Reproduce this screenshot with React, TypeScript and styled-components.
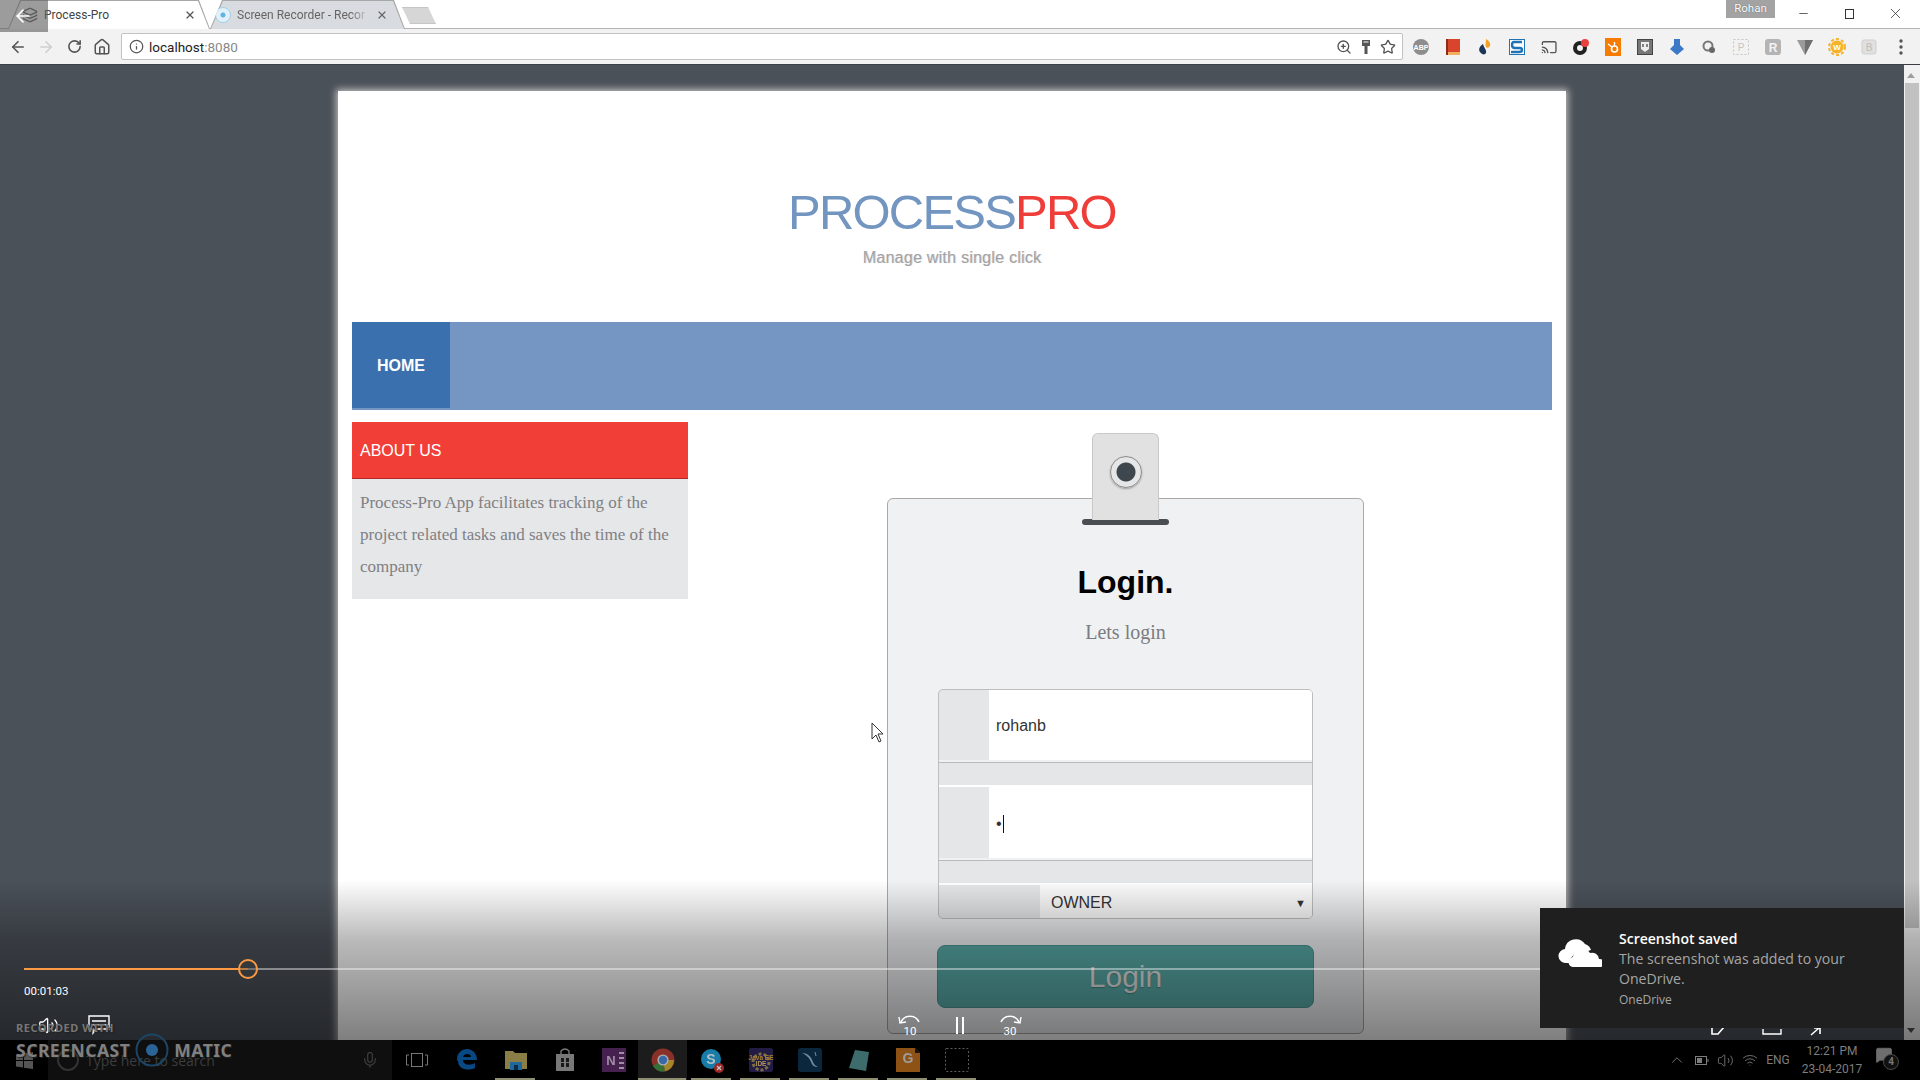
import React from "react"
import styled, { createGlobalStyle } from "styled-components"
import {
    ArrowLeft,
    ArrowRight,
    Cast,
    ChevronUp,
    Home,
    Info,
    Layers,
    MessageSquare,
    Mic,
    Minus,
    RotateCw,
    Star,
    Volume2,
    Wifi,
    X,
    ZoomIn
} from "lucide-react"

const GlobalStyle = createGlobalStyle`
    html, body {
        margin: 0;
        padding: 0;
        height: 100%;
        overflow: hidden;
        background: #000;
    }
    * {
        box-sizing: border-box;
    }
`

const Screen = styled.div`
    display: flex;
    flex-direction: column;
    width: 1920px;
    height: 1080px;
    overflow: hidden;
    font-family: "Liberation Sans", Arial, sans-serif;
`

/* browser chrome */
const TabStrip = styled.div`
    position: relative;
    display: flex;
    align-items: flex-start;
    height: 29px;
    padding: 0 2px 0 8px;
    background: #fff;
    border-bottom: 1px solid #b4b4b4;
`

const Tab = styled.div<{ $active?: boolean; $width: number; $left: number; $right: number }>`
    position: relative;
    display: flex;
    align-items: center;
    gap: 6px;
    width: ${p => p.$width}px;
    height: 29px;
    padding: 1px ${p => p.$right}px 0 ${p => p.$left}px;
    font-family: Roboto, sans-serif;
    font-size: 12px;
    color: ${p => (p.$active ? "#444" : "#666")};
    background: #a8a8a8;
    clip-path: polygon(12px 0, calc(100% - 11px) 0, 100% 100%, 0 100%);
    z-index: ${p => (p.$active ? 2 : 1)};

    &::before {
        content: "";
        position: absolute;
        inset: 1px 1px 0 1px;
        background: ${p => (p.$active ? "#fff" : "#d8dbdf")};
        clip-path: polygon(12px 0, calc(100% - 11px) 0, 100% 100%, 0 100%);
        z-index: -1;
    }
`

const TabTitle = styled.span<{ $fade?: boolean }>`
    flex: 1;
    overflow: hidden;
    white-space: nowrap;
    ${p => (p.$fade ? "mask-image: linear-gradient(90deg, #000 85%, transparent);" : "")}
`

const TabIconRing = styled.span`
    width: 16px;
    height: 16px;
    border-radius: 50%;
    border: 1px solid #9fd0ea;
    background: radial-gradient(circle, #5fb4e0 0 2px, #e2f1f9 3px);
    flex-shrink: 0;
`

const NewTab = styled.div`
    width: 34px;
    height: 17px;
    margin: 7px 0 0 -3px;
    background: #d6d6d6;
    border: 1px solid #c6c6c6;
    clip-path: polygon(0 0, calc(100% - 8px) 0, 100% 100%, 8px 100%);
`

const UserBadge = styled.div`
    width: 49px;
    height: 18px;
    margin-left: auto;
    margin-right: 5px;
    background: #a3a3a3;
    color: #fff;
    font-family: Roboto, sans-serif;
    font-size: 11.5px;
    line-height: 17px;
    text-align: center;
    text-shadow: 0 0 1px #555;
`

const WindowButton = styled.div`
    display: flex;
    align-items: center;
    justify-content: center;
    width: 46px;
    height: 26px;
    color: #333;
`

const RestoreGlyph = styled.span`
    position: relative;
    width: 9px;
    height: 10px;
    margin-top: 2px;
    border: 1px solid #333;
    background: #fff;

    &::before {
        content: "";
        position: absolute;
        top: -3px;
        left: 1px;
        width: 9px;
        height: 10px;
        border: 1px solid #333;
        z-index: -1;
    }
`

const BackHint = styled.div`
    position: absolute;
    top: 0;
    left: 0;
    width: 48px;
    height: 32px;
    display: flex;
    align-items: center;
    justify-content: center;
    padding-right: 3px;
    background: rgba(95, 95, 95, 0.62);
    color: #fff;
    z-index: 5;
`

const Toolbar = styled.div`
    display: flex;
    align-items: center;
    height: 36px;
    padding: 0 3px 0 4px;
    background: #f2f2f2;
    border-bottom: 1px solid #3c3f44;
`

const NavButton = styled.div<{ $dim?: boolean }>`
    display: flex;
    align-items: center;
    justify-content: center;
    width: 28px;
    color: ${p => (p.$dim ? "#cfcfcf" : "#555")};
`

const AddressBar = styled.div`
    display: flex;
    align-items: center;
    flex: 1;
    height: 27px;
    margin: 0 2px 0 5px;
    padding: 0 6px 0 7px;
    background: #fff;
    border: 1px solid #c2c2c2;
    border-radius: 2px;
    color: #555;
`

const AddressText = styled.span`
    margin-left: 5px;
    font-family: Roboto, sans-serif;
    font-size: 13.5px;
    color: #222;

    em {
        font-style: normal;
        color: #888;
    }
`

const AddressActions = styled.div`
    display: flex;
    align-items: center;
    gap: 6px;
    margin-left: auto;
`

const ExtSlot = styled.div`
    display: flex;
    align-items: center;
    justify-content: center;
    width: 32px;
    height: 18px;
`

/* page */
const Viewport = styled.div`
    position: relative;
    display: flex;
    flex: 1;
    min-height: 0;
    overflow: hidden;
    background: #4b5159;
`

const PageArea = styled.div`
    flex: 1;
    min-width: 0;
    padding-top: 26px;
`

const Page = styled.div`
    width: 1228px;
    height: 1000px;
    margin: 0 auto;
    padding: 0 14px;
    background: #fff;
    box-shadow: 0 0 7px 2px #bdbdbd;
`

const Brand = styled.header`
    display: flex;
    flex-direction: column;
    align-items: center;
    height: 231px;
    padding-top: 93px;
`

const Logo = styled.h1`
    margin: 0;
    font-size: 49px;
    line-height: 56px;
    font-weight: 400;
    letter-spacing: -1.8px;
    color: #7396c1;

    span {
        color: #ef3e3a;
    }
`

const Tagline = styled.div`
    margin-top: 9px;
    font-size: 16px;
    line-height: 18px;
    letter-spacing: 0.25px;
    color: #a2a2a2;
    text-shadow: 1px 0 0 #ddd;
`

const NavBar = styled.nav`
    display: flex;
    height: 88px;
    background: #7596c3;
`

const NavItem = styled.div`
    display: flex;
    align-items: center;
    justify-content: center;
    width: 98px;
    height: 86px;
    padding-top: 2px;
    background: #3a70ad;
    color: #fff;
    font-size: 16px;
    font-weight: 700;
`

const Columns = styled.div`
    display: grid;
    grid-template-columns: 336px 1fr;
    margin-top: 12px;
`

const AboutCard = styled.aside`
    align-self: start;
    background: #e6e7e9;
`

const AboutTitle = styled.div`
    height: 57px;
    padding-left: 8px;
    background: #f13f38;
    border-bottom: 1px solid #b22a26;
    color: #fff;
    font-size: 16px;
    line-height: 58px;
`

const AboutText = styled.p`
    margin: 0;
    padding: 8px 8px 16px;
    font-family: "Liberation Serif", "Times New Roman", serif;
    font-size: 17px;
    line-height: 32px;
    color: #7f8084;
`

const LoginColumn = styled.section`
    display: flex;
    justify-content: center;
    padding: 76px 0 0 11px;
`

const LoginCard = styled.div`
    position: relative;
    width: 477px;
    padding: 63px 0 25px;
    background: #f0f1f3;
    border: 1px solid #a9a9a9;
    border-radius: 6px;
`

const ClipBar = styled.div`
    position: absolute;
    top: 20px;
    left: 194px;
    width: 87px;
    height: 6px;
    border-radius: 3px;
    background: #4a4e52;
`

const Clip = styled.div`
    position: absolute;
    top: -66px;
    left: 204px;
    display: flex;
    justify-content: center;
    width: 67px;
    height: 87px;
    padding-top: 22px;
    background: #e1e1e2;
    border: 1px solid #c9c9c9;
    border-bottom: 0;
    border-radius: 6px 6px 0 0;
`

const ClipLens = styled.div`
    width: 32px;
    height: 32px;
    border-radius: 50%;
    border: 1px solid #8c8c8c;
    background: radial-gradient(circle, #3f474e 0 9px, #e6e6e6 10px);
    box-shadow: 0 1px 2px rgba(0, 0, 0, 0.3);
`

const LoginTitle = styled.h2`
    margin: 0;
    font-size: 32px;
    line-height: 40px;
    font-weight: 700;
    text-align: center;
    color: #000;
`

const LoginSubtitle = styled.p`
    margin: 18px 0 0;
    font-family: "Liberation Serif", "Times New Roman", serif;
    font-size: 20px;
    line-height: 24px;
    text-align: center;
    color: #7a7c80;
`

const Form = styled.div`
    width: 375px;
    margin: 45px 0 0 50px;
    overflow: hidden;
    background: #e5e6e8;
    border: 1px solid #bdbec0;
    border-radius: 5px;
`

const Field = styled.div<{ $height: number; $label: number }>`
    display: flex;
    height: ${p => p.$height}px;
    padding-left: ${p => p.$label}px;
`

const InputBox = styled.div`
    display: flex;
    align-items: center;
    flex: 1;
    padding: 2px 0 0 7px;
    background: #fff;
    font-size: 16px;
    color: #333;
`

const Caret = styled.span`
    width: 1px;
    height: 18px;
    margin-left: 1px;
    background: #111;
`

const Separator = styled.div`
    height: 27px;
    background: linear-gradient(#f0f1f3 0 2px, #b9babc 2px 3px, #e5e6e8 3px 25px, #fff 25px);
`

const SelectBox = styled.div`
    display: flex;
    align-items: center;
    justify-content: space-between;
    flex: 1;
    padding: 2px 6px 0 11px;
    background: #fbfbfb;
    font-size: 16px;
    color: #333;

    i {
        font-style: normal;
        font-size: 11px;
    }
`

const SubmitButton = styled.button`
    display: block;
    width: 377px;
    height: 63px;
    margin: 26px auto 0;
    padding: 0;
    background: #58aba8;
    border: 1px solid #4a9592;
    border-radius: 8px;
    color: #e4e4e4;
    font-family: "Liberation Sans", Arial, sans-serif;
    font-size: 30px;
    text-shadow: 0 1px 1px rgba(0, 0, 0, 0.25);
`

const Scrollbar = styled.div`
    display: flex;
    flex-direction: column;
    align-items: center;
    width: 16px;
    padding-top: 18px;
    background: #f1f1f1;
`

const ScrollThumb = styled.div`
    width: 14px;
    height: 845px;
    background: #c1c1c1;
`

const ScrollArrow = styled.span<{ $down?: boolean }>`
    position: absolute;
    right: 5px;
    ${p => (p.$down ? "bottom: 7px;" : "top: 8px;")}
    border-left: 4px solid transparent;
    border-right: 4px solid transparent;
    ${p => (p.$down ? "border-top: 5px solid #505050;" : "border-bottom: 5px solid #a0a0a0;")}
`

const Cursor = styled.svg`
    position: absolute;
    left: 871px;
    top: 657px;
`

/* video player over the page */
const PlayerShade = styled.div`
    position: absolute;
    inset: 0;
    background: linear-gradient(
        transparent 815px,
        rgba(0, 0, 0, 0.27) 875px,
        rgba(0, 0, 0, 0.5) 975px
    );
    pointer-events: none;
`

const SeekTrack = styled.div`
    position: absolute;
    top: 903px;
    left: 24px;
    right: 16px;
    height: 2px;
    background: rgba(255, 255, 255, 0.42);
`

const SeekFill = styled.div`
    height: 100%;
    background: #fb9a42;
`

const SeekKnob = styled.div`
    position: absolute;
    top: -9px;
    width: 20px;
    height: 20px;
    margin-left: -10px;
    border: 2px solid #fb9a42;
    border-radius: 50%;
    background: rgba(60, 60, 60, 0.35);
`

const PlayerTime = styled.div`
    position: absolute;
    top: 918px;
    left: 24px;
    font-family: Roboto, sans-serif;
    font-size: 11.5px;
    line-height: 16px;
    color: #fff;
`

const PlayerIcon = styled.div<{ $x: number; $y: number }>`
    position: absolute;
    left: ${p => p.$x}px;
    top: ${p => p.$y}px;
    display: flex;
    color: #fff;
`

const Toast = styled.div`
    position: absolute;
    right: 16px;
    bottom: 12px;
    display: flex;
    width: 364px;
    height: 120px;
    padding: 21px 0 0 18px;
    background: #1f1f1f;
    font-family: "Open Sans", sans-serif;
`

const ToastIcon = styled.div`
    width: 61px;
    padding-top: 10px;
`

const ToastTitle = styled.div`
    font-size: 14px;
    line-height: 20px;
    font-weight: 600;
    color: #fff;
`

const ToastBody = styled.div`
    width: 240px;
    font-size: 14.1px;
    line-height: 20px;
    color: #a6a6a6;
`

const ToastSource = styled.div`
    margin-top: 1px;
    font-size: 12px;
    line-height: 20px;
    color: #a6a6a6;
`

/* windows taskbar */
const Taskbar = styled.footer`
    position: relative;
    display: flex;
    align-items: stretch;
    height: 40px;
    background: #000;
    color: #777;
`

const StartButton = styled.div`
    display: flex;
    align-items: center;
    justify-content: center;
    width: 48px;
`

const SearchBox = styled.div`
    display: flex;
    align-items: center;
    width: 344px;
    padding: 0 12px 0 9px;
    background: #0f0f0f;
    color: #3d3d3d;
    font-family: "Open Sans", sans-serif;
    font-size: 14px;
`

const SearchRing = styled.span`
    width: 22px;
    height: 22px;
    margin-right: 7px;
    border: 2px solid #333;
    border-radius: 50%;
`

const SearchMic = styled.span`
    display: flex;
    margin-left: auto;
    margin-right: 1px;
`

const TaskViewButton = styled.div`
    display: flex;
    align-items: center;
    justify-content: center;
    width: 50px;
`

const TaskIcon = styled.div<{ $open?: boolean; $active?: boolean }>`
    position: relative;
    display: flex;
    align-items: center;
    justify-content: center;
    width: 49px;
    background: ${p => (p.$active ? "#1c1c1c" : "transparent")};

    svg {
        opacity: 0.78;
    }

    &::after {
        content: "";
        display: ${p => (p.$open ? "block" : "none")};
        position: absolute;
        left: ${p => (p.$active ? 0 : 4)}px;
        right: ${p => (p.$active ? 1 : 5)}px;
        bottom: 0;
        height: 2px;
        background: #8f8f72;
    }
`

const Tray = styled.div`
    display: flex;
    align-items: stretch;
    margin-left: auto;
    padding-right: 17px;
`

const TraySlot = styled.div<{ $width: number }>`
    display: flex;
    align-items: center;
    justify-content: center;
    width: ${p => p.$width}px;
    font-family: Roboto, sans-serif;
    font-size: 12px;
    color: #7d7d7d;
`

const Clock = styled.div`
    font-family: Roboto, sans-serif;
    font-size: 12px;
    line-height: 18px;
    text-align: center;
    color: #7d7d7d;
`

const TrayBadge = styled.span`
    position: absolute;
    left: 8px;
    top: 8px;
    width: 16px;
    height: 16px;
    border: 1px solid #4a4a4a;
    border-radius: 50%;
    background: #111;
    font-size: 10px;
    font-weight: 700;
    line-height: 14px;
    text-align: center;
    color: #777;
`

const TrayNotify = styled.div`
    position: relative;
    display: flex;
    width: 24px;
    height: 24px;
    margin-top: -4px;
    color: #6e6e6e;
`

const Watermark = styled.div`
    position: absolute;
    left: 16px;
    bottom: 13px;
    display: flex;
    flex-direction: column;
    font-family: "Noto Sans", sans-serif;
    font-weight: 700;
    color: #808080;
    text-shadow: 1px 1px 1px #222;
    pointer-events: none;
`

const WatermarkSmall = styled.div`
    font-size: 11px;
    line-height: 14px;
    letter-spacing: 0.55px;
    color: #777;
`

const WatermarkBrand = styled.div`
    display: flex;
    align-items: center;
    gap: 5px;
    margin-top: -2px;
    font-size: 17.5px;
    line-height: 30px;
    letter-spacing: 0.5px;
`

const extensions = [
    <g key="abp">
        <circle cx="8" cy="8" r="8" fill="#8d8d8d" />
        <text x="8" y="10.5" fontSize="7" fontWeight="700" fill="#fff" textAnchor="middle" fontFamily="Liberation Sans">ABP</text>
    </g>,
    <g key="book">
        <rect x="1" y="0" width="14" height="16" fill="#d9452c" />
        <rect x="1" y="13" width="14" height="3" fill="#f0b060" />
        <rect x="1" y="0" width="2" height="16" fill="#8e2a1a" />
    </g>,
    <g key="drop">
        <path d="M9 0c3 2 5 4 4 7-1 2-3 2-4 1-1-2 0-4 0-8z" fill="#f5a020" />
        <path d="M6 5C3 7 1 10 3 13c2 3 5 3 6 1 1-3-2-5-3-9z" fill="#1b3558" />
    </g>,
    <g key="s">
        <rect x="0.5" y="0.5" width="15" height="15" fill="#fff" stroke="#1f74b8" />
        <path d="M13 3H5Q3 3 3 6t3 3h5q2 0 2 2t-3 2H2" fill="none" stroke="#1f74b8" strokeWidth="2.4" />
    </g>,
    <g key="cast" transform="scale(.68)">
        <Cast size={24} color="#555" />
    </g>,
    <g key="ring">
        <circle cx="7" cy="9" r="5" fill="none" stroke="#222" strokeWidth="4" />
        <circle cx="12" cy="4" r="4" fill="#e8423f" />
    </g>,
    <g key="hub">
        <rect width="16" height="18" y="-1" fill="#f57c00" />
        <circle cx="9.5" cy="10" r="3" fill="none" stroke="#fff" strokeWidth="1.6" />
        <path d="M9.5 7V3M7 8 3 5" stroke="#fff" strokeWidth="1.4" />
    </g>,
    <g key="mask">
        <rect x="0.5" y="0.5" width="15" height="15" fill="#777" stroke="#444" />
        <path d="M4 3h8v7l-4 3-4-3z" fill="#eee" />
        <path d="M6 5v3M10 5v3" stroke="#555" strokeWidth="1.4" />
    </g>,
    <g key="arrow">
        <path d="M5 0h6v6l4 4-7 6-7-6 4-4z" fill="#3c78c8" />
    </g>,
    <g key="swirl">
        <circle cx="7" cy="7" r="4.5" fill="none" stroke="#777" strokeWidth="2" />
        <circle cx="11" cy="11" r="3" fill="#666" />
    </g>,
    <g key="dashed">
        <rect x="0.5" y="0.5" width="15" height="15" fill="none" stroke="#c4c4c4" strokeDasharray="2 2" />
        <text x="8" y="12" fontSize="10" fill="#c4c4c4" textAnchor="middle" fontFamily="Liberation Sans">P</text>
    </g>,
    <g key="r">
        <rect width="16" height="16" rx="3" fill="#b4b4b4" />
        <text x="8" y="12.5" fontSize="12" fontWeight="700" fill="#f2f2f2" textAnchor="middle" fontFamily="Liberation Sans">R</text>
    </g>,
    <g key="v">
        <path d="M0 1h16l-8 15z" fill="#9a9a9a" />
        <path d="M8 1h8l-8 15z" fill="#6f6f6f" />
    </g>,
    <g key="gear">
        <circle cx="8" cy="8" r="6.5" fill="#f6b32a" />
        <circle cx="8" cy="8" r="8" fill="none" stroke="#f6b32a" strokeWidth="2" strokeDasharray="3 2.2" />
        <text x="8" y="11" fontSize="8" fontWeight="700" fill="#fff" textAnchor="middle" fontFamily="Liberation Sans">W</text>
    </g>,
    <g key="b">
        <rect x="1" y="1" width="14" height="14" rx="2" fill="#e0e0e0" stroke="#cfcfcf" />
        <text x="8" y="12" fontSize="10" fill="#bdbdbd" textAnchor="middle" fontFamily="Liberation Sans">B</text>
    </g>,
    <g key="menu" fill="#555">
        <circle cx="8" cy="2" r="1.7" />
        <circle cx="8" cy="8" r="1.7" />
        <circle cx="8" cy="14" r="1.7" />
    </g>
]

const taskApps = [
    {
        id: "edge",
        open: false,
        art: <path d="M2 11C2 4 8 1 12 1c6 0 10 5 10 11H8c0 5 7 6 12 3v5c-6 3-17 2-17-7-1 0-1-1-1-2zm6-2h8c0-4-7-4-8 0z" fill="#0a5ca8" />
    },
    {
        id: "explorer",
        open: true,
        art: (
            <g>
                <path d="M1 3h8l2 2h12v16H1z" fill="#b3a05a" />
                <rect x="6" y="14" width="12" height="8" fill="#2a86c8" />
                <rect x="10" y="17" width="4" height="5" fill="#0d3a5c" />
            </g>
        )
    },
    {
        id: "store",
        open: false,
        art: (
            <g>
                <path d="M3 6h18v17H3z" fill="#9a9a9a" />
                <path d="M8 6V3q4-4 8 0v3" fill="none" stroke="#9a9a9a" strokeWidth="1.4" />
                <path d="M8 10h3v4H8zM13 10h3v4h-3zM8 15h3v4H8zM13 15h3v4h-3z" fill="#222" />
            </g>
        )
    },
    {
        id: "onenote",
        open: false,
        art: (
            <g>
                <rect width="24" height="24" fill="#5a2a66" />
                <text x="9" y="17" fontSize="13" fontWeight="700" fill="#cdb6d2" textAnchor="middle" fontFamily="Liberation Sans">N</text>
                <path d="M17 5h5M17 10h5M17 15h5M17 20h5" stroke="#cdb6d2" strokeWidth="2" />
            </g>
        )
    },
    {
        id: "chrome",
        open: true,
        active: true,
        art: (
            <g>
                <circle cx="12" cy="12" r="11.5" fill="#a8382c" />
                <path d="M12 12 2 18a11.5 11.5 0 0 0 12 5.3z" fill="#3c8a3e" />
                <path d="M12 12h11a11.5 11.5 0 0 1-9 11.3z" fill="#c9a52c" />
                <circle cx="12" cy="12" r="5.6" fill="#d9d9d9" />
                <circle cx="12" cy="12" r="4.2" fill="#3f7fd0" />
            </g>
        )
    },
    {
        id: "skype",
        open: true,
        art: (
            <g>
                <circle cx="11" cy="11" r="10" fill="#1f9fd8" />
                <text x="11" y="16" fontSize="14" fontWeight="700" fill="#e6f5fb" textAnchor="middle" fontFamily="Liberation Sans">S</text>
                <circle cx="19" cy="20" r="5" fill="#c83232" />
                <path d="M17 18l4 4M21 18l-4 4" stroke="#fff" strokeWidth="1.2" />
            </g>
        )
    },
    {
        id: "java",
        open: true,
        art: (
            <g>
                <rect width="24" height="24" rx="2" fill="#2c2458" />
                <circle cx="12" cy="14" r="8" fill="none" stroke="#a08a5a" strokeWidth="3" strokeDasharray="3 2" />
                <text x="12" y="12" fontSize="6.5" fontWeight="700" fill="#d9a441" textAnchor="middle" fontFamily="Liberation Sans">Java EE</text>
                <text x="12" y="18" fontSize="6.5" fontWeight="700" fill="#e0c080" textAnchor="middle" fontFamily="Liberation Sans">IDE</text>
            </g>
        )
    },
    {
        id: "mysql",
        open: true,
        art: (
            <g>
                <rect width="24" height="24" rx="3" fill="#0e3350" />
                <path d="M4 5c5 0 9 3 11 9 1 3 3 4 5 5-4 0-6-2-7-5C11 9 8 7 4 5z" fill="#8fb4c8" />
                <path d="M17 4l1 4" stroke="#8fb4c8" />
            </g>
        )
    },
    {
        id: "notes",
        open: true,
        art: <path d="M8 2l14 2-3 19-17-3z" fill="#4f8a8c" />
    },
    {
        id: "gpdf",
        open: true,
        art: (
            <g>
                <path d="M0 0h19l5 5v19H0z" fill="#b8691c" />
                <path d="M19 0l5 5h-5z" fill="#1a1a1a" />
                <text x="12" y="15" fontSize="14" fontWeight="700" fill="#c9c9c9" textAnchor="middle" fontFamily="Liberation Sans">G</text>
            </g>
        )
    },
    {
        id: "snip",
        open: true,
        art: <rect x="0.5" y="0.5" width="23" height="23" rx="1" fill="none" stroke="#777" strokeDasharray="2 2" />
    }
]

const SkipIcon = ({ label, flip }: { label: string; flip?: boolean }) => (
    <svg width="24" height="24" viewBox="0 0 24 24">
        <g transform={flip ? "translate(24 0) scale(-1 1)" : undefined} fill="none" stroke="#fff" strokeWidth="1.5">
            <path d="M3 9a10 10 0 0 1 18 0" />
            <path d="M1 4l1 6 6-1" strokeWidth="1.4" />
        </g>
        <text x="12" y="22" fontSize="11.5" fill="#fff" textAnchor="middle" fontFamily="Roboto">{label}</text>
    </svg>
)

export default function App() {
    return (
        <Screen>
            <GlobalStyle />
            <TabStrip>
                <BackHint>
                    <ArrowLeft size={20} strokeWidth={2} />
                </BackHint>
                <Tab $active $width={202} $left={14} $right={14}>
                    <Layers size={16} color="#555" />
                    <TabTitle>Process-Pro</TabTitle>
                    <X size={12} strokeWidth={2.4} color="#555" />
                </Tab>
                <Tab $width={195} $left={5} $right={17}>
                    <TabIconRing />
                    <TabTitle $fade>Screen Recorder - Recor</TabTitle>
                    <X size={12} strokeWidth={2.4} color="#666" />
                </Tab>
                <NewTab />
                <UserBadge>Rohan</UserBadge>
                <WindowButton>
                    <Minus size={13} strokeWidth={1.4} />
                </WindowButton>
                <WindowButton>
                    <RestoreGlyph />
                </WindowButton>
                <WindowButton>
                    <X size={17} strokeWidth={1.1} />
                </WindowButton>
            </TabStrip>

            <Toolbar>
                <NavButton>
                    <ArrowLeft size={18} strokeWidth={2.2} />
                </NavButton>
                <NavButton $dim>
                    <ArrowRight size={18} strokeWidth={2.2} />
                </NavButton>
                <NavButton>
                    <RotateCw size={15} strokeWidth={2.6} />
                </NavButton>
                <NavButton>
                    <Home size={18} strokeWidth={2} />
                </NavButton>
                <AddressBar>
                    <Info size={15} strokeWidth={2} />
                    <AddressText>
                        localhost<em>:8080</em>
                    </AddressText>
                    <AddressActions>
                        <ZoomIn size={16} />
                        <svg width="16" height="16" viewBox="0 0 16 16" fill="#555">
                            <path d="M4 1h8v6H9.5v8h-3V7H4z" />
                            <path d="M5.5 3h5" stroke="#fff" />
                        </svg>
                        <Star size={16} strokeWidth={2} />
                    </AddressActions>
                </AddressBar>
                {extensions.map((art, i) => (
                    <ExtSlot key={i}>
                        <svg width="16" height="16" viewBox="0 0 16 16" overflow="visible">
                            {art}
                        </svg>
                    </ExtSlot>
                ))}
            </Toolbar>

            <Viewport>
                <PageArea>
                    <Page>
                        <Brand>
                            <Logo>
                                PROCESS<span>PRO</span>
                            </Logo>
                            <Tagline>Manage with single click</Tagline>
                        </Brand>
                        <NavBar>
                            <NavItem>HOME</NavItem>
                        </NavBar>
                        <Columns>
                            <AboutCard>
                                <AboutTitle>ABOUT US</AboutTitle>
                                <AboutText>
                                    Process-Pro App facilitates tracking of the project related tasks and saves the time of the company
                                </AboutText>
                            </AboutCard>
                            <LoginColumn>
                                <LoginCard>
                                    <ClipBar />
                                    <Clip>
                                        <ClipLens />
                                    </Clip>
                                    <LoginTitle>Login.</LoginTitle>
                                    <LoginSubtitle>Lets login</LoginSubtitle>
                                    <Form>
                                        <Field $height={70} $label={50}>
                                            <InputBox>rohanb</InputBox>
                                        </Field>
                                        <Separator />
                                        <Field $height={71} $label={50}>
                                            <InputBox>
                                                •<Caret />
                                            </InputBox>
                                        </Field>
                                        <Separator />
                                        <Field $height={33} $label={101}>
                                            <SelectBox>
                                                OWNER
                                                <i>▼</i>
                                            </SelectBox>
                                        </Field>
                                    </Form>
                                    <SubmitButton>Login</SubmitButton>
                                </LoginCard>
                            </LoginColumn>
                        </Columns>
                    </Page>
                </PageArea>
                <Scrollbar>
                    <ScrollArrow />
                    <ScrollThumb />
                    <ScrollArrow $down />
                </Scrollbar>

                <Cursor width="13" height="21" viewBox="0 0 13 21">
                    <path d="M1 1v16l4-4 3 7 2-1-3-7h5z" fill="#fff" stroke="#333" strokeWidth="1" />
                </Cursor>

                <PlayerShade />
                <SeekTrack>
                    <SeekFill style={{ width: 224 }} />
                    <SeekKnob style={{ left: 224 }} />
                </SeekTrack>
                <PlayerTime>00:01:03</PlayerTime>
                <PlayerIcon $x={38} $y={950}>
                    <Volume2 size={21} strokeWidth={1.5} />
                </PlayerIcon>
                <PlayerIcon $x={88} $y={950}>
                    <svg width="22" height="20" viewBox="0 0 22 20" fill="none" stroke="#fff" strokeWidth="1.4">
                        <path d="M1 1h20v13H8l-3 4v-4H1z" />
                        <path d="M4 6h14M4 10h14" />
                    </svg>
                </PlayerIcon>
                <PlayerIcon $x={898} $y={948}>
                    <SkipIcon label="10" />
                </PlayerIcon>
                <PlayerIcon $x={956} $y={952}>
                    <svg width="8" height="17" viewBox="0 0 8 17" fill="#fff">
                        <rect width="2" height="17" />
                        <rect x="6" width="2" height="17" />
                    </svg>
                </PlayerIcon>
                <PlayerIcon $x={998} $y={948}>
                    <SkipIcon label="30" flip />
                </PlayerIcon>
                <PlayerIcon $x={1711} $y={958}>
                    <svg width="14" height="12" viewBox="0 0 14 12" fill="none" stroke="#fff" strokeWidth="1.6">
                        <path d="M1 4v7h6l6-7" />
                    </svg>
                </PlayerIcon>
                <PlayerIcon $x={1762} $y={964}>
                    <svg width="20" height="6" viewBox="0 0 20 6" fill="none" stroke="#fff" strokeWidth="1.4">
                        <path d="M1 0v5h18V0" />
                    </svg>
                </PlayerIcon>
                <PlayerIcon $x={1810} $y={962}>
                    <svg width="11" height="9" viewBox="0 0 11 9" fill="none" stroke="#fff" strokeWidth="1.6">
                        <path d="M1 8l8-7M4 1h6v6" />
                    </svg>
                </PlayerIcon>

                <Toast>
                    <ToastIcon>
                        <svg width="44" height="28" viewBox="0 0 44 28" fill="#fff">
                            <path d="M8 24a7 7 0 0 1-1-14 11 11 0 0 1 20-5 9 9 0 0 1 6 6l-3 1a11 11 0 0 0-15 5 8 8 0 0 0-4 7z" />
                            <path d="M16 28a5 5 0 0 1-1-10 9 9 0 0 1 17-4 7 7 0 0 1 9 6 4 4 0 0 1 1 8z" />
                        </svg>
                    </ToastIcon>
                    <div>
                        <ToastTitle>Screenshot saved</ToastTitle>
                        <ToastBody>The screenshot was added to your OneDrive.</ToastBody>
                        <ToastSource>OneDrive</ToastSource>
                    </div>
                </Toast>
            </Viewport>

            <Taskbar>
                <StartButton>
                    <svg width="17" height="17" viewBox="0 0 17 17" fill="#555">
                        <path d="M0 2.4 7 1.4V8H0zM8 1.2 17 0v8H8zM0 9h7v6.6L0 14.6zM8 9h9v8l-9-1.2z" />
                    </svg>
                </StartButton>
                <SearchBox>
                    <SearchRing />
                    Type here to search
                    <SearchMic>
                        <Mic size={18} strokeWidth={1.4} color="#444" />
                    </SearchMic>
                </SearchBox>
                <TaskViewButton>
                    <svg width="22" height="16" viewBox="0 0 22 16" fill="none" stroke="#777">
                        <rect x="5.5" y="1.5" width="11" height="13" />
                        <path d="M3 3H.5v10H3M19 3h2.5v10H19" />
                    </svg>
                </TaskViewButton>
                {taskApps.map(app => (
                    <TaskIcon key={app.id} $open={app.open} $active={app.active}>
                        <svg width="24" height="24" viewBox="0 0 24 24" overflow="visible">
                            {app.art}
                        </svg>
                    </TaskIcon>
                ))}
                <Tray>
                    <TraySlot $width={24}>
                        <ChevronUp size={18} strokeWidth={1.2} />
                    </TraySlot>
                    <TraySlot $width={24}>
                        <svg width="16" height="11" viewBox="0 0 16 11" fill="none" stroke="#7d7d7d">
                            <rect x="2.5" y="1.5" width="11" height="8" />
                            <rect x="4" y="3" width="5" height="5" fill="#7d7d7d" stroke="none" />
                            <path d="M15 4v3" />
                        </svg>
                    </TraySlot>
                    <TraySlot $width={24}>
                        <Volume2 size={17} strokeWidth={1.2} />
                    </TraySlot>
                    <TraySlot $width={26}>
                        <Wifi size={16} strokeWidth={1.3} />
                    </TraySlot>
                    <TraySlot $width={30}>ENG</TraySlot>
                    <TraySlot $width={78}>
                        <Clock>
                            12:21 PM
                            <br />
                            23-04-2017
                        </Clock>
                    </TraySlot>
                    <TraySlot $width={32}>
                        <TrayNotify>
                            <MessageSquare size={18} fill="#6e6e6e" strokeWidth={1} />
                            <TrayBadge>4</TrayBadge>
                        </TrayNotify>
                    </TraySlot>
                </Tray>
                <Watermark>
                    <WatermarkSmall>RECORDED WITH</WatermarkSmall>
                    <WatermarkBrand>
                        SCREENCAST
                        <svg width="34" height="34" viewBox="0 0 34 34">
                            <circle cx="17" cy="17" r="15.5" fill="none" stroke="#1d4565" strokeWidth="2" />
                            <circle cx="17" cy="17" r="6" fill="#2a6496" />
                        </svg>
                        MATIC
                    </WatermarkBrand>
                </Watermark>
            </Taskbar>
        </Screen>
    )
}
